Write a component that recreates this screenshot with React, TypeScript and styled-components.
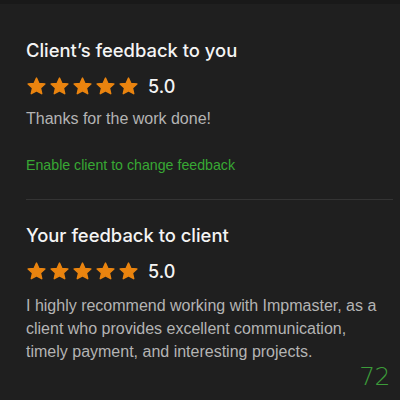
import styled, { createGlobalStyle } from "styled-components";

const GlobalStyle = createGlobalStyle`
  html, body {
    margin: 0;
    padding: 0;
    background: #1f1f1f;
  }
  body {
    font-family: "Liberation Sans", Arial, sans-serif;
    -webkit-font-smoothing: antialiased;
  }
`;

const Page = styled.div`
  width: 400px;
  height: 400px;
  background: #1f1f1f;
  border-top: 4px solid #191919;
  box-sizing: border-box;
  position: relative;
  overflow: hidden;
`;

const Section = styled.section<{ $divider?: boolean }>`
  margin: 0 7px 0 26px;
  padding: ${(p) => (p.$divider ? "23px 0 0" : "34px 0 26px")};
  border-bottom: ${(p) => (p.$divider ? "none" : "1px solid #343434")};
`;

const Title = styled.h2`
  margin: 0;
  font-family: Inter, "Liberation Sans", sans-serif;
  font-size: 18.4px;
  line-height: 24px;
  font-weight: 500;
  color: #f4f4f4;
`;

const RatingRow = styled.div`
  display: flex;
  align-items: center;
  gap: 2px;
  margin-top: 13px;
  height: 22px;
`;

const Score = styled.span`
  margin-left: 7px;
  font-family: Inter, "Liberation Sans", sans-serif;
  font-size: 18px;
  font-weight: 500;
  color: #f4f4f4;
`;

const Comment = styled.p<{ $gap?: number }>`
  margin: ${(p) => p.$gap ?? 10}px 0 0;
  font-size: 16px;
  line-height: 23px;
  color: #b4b4b4;
  padding-right: 10px;
`;

const ActionLink = styled.a`
  display: block;
  margin-top: 27px;
  font-size: 14.2px;
  color: #38a834;
  text-decoration: none;
  cursor: pointer;
`;

const Counter = styled.span`
  position: absolute;
  right: 10px;
  bottom: 9px;
  font-size: 25px;
  font-weight: 300;
  color: #3c9c3a;
  font-family: "DejaVu Sans", "Liberation Sans", sans-serif;
  letter-spacing: -0.5px;
`;

function Star() {
  return (
    <svg width="21" height="21" viewBox="0 0 24 24">
      <path
        d="M12 2.4l2.8 6.2 6.8.6-5.1 4.5 1.5 6.6L12 16.9l-6 3.4 1.5-6.6-5.1-4.5 6.8-.6z"
        fill="#ea840f"
        stroke="#ea840f"
        strokeWidth="1.6"
        strokeLinejoin="round"
      />
    </svg>
  );
}

function Rating({ value }: { value: number }) {
  return (
    <RatingRow>
      {[0, 1, 2, 3, 4].map((i) => (
        <Star key={i} />
      ))}
      <Score>{value.toFixed(1)}</Score>
    </RatingRow>
  );
}

export default function App() {
  return (
    <>
      <GlobalStyle />
      <Page>
        <Section>
          <Title>Client’s feedback to you</Title>
          <Rating value={5} />
          <Comment>Thanks for the work done!</Comment>
          <ActionLink>Enable client to change feedback</ActionLink>
        </Section>
        <Section $divider>
          <Title>Your feedback to client</Title>
          <Rating value={5} />
          <Comment $gap={12}>
            I highly recommend working with Impmaster, as a client who provides
            excellent communication, timely payment, and interesting projects.
          </Comment>
        </Section>
        <Counter>72</Counter>
      </Page>
    </>
  );
}
